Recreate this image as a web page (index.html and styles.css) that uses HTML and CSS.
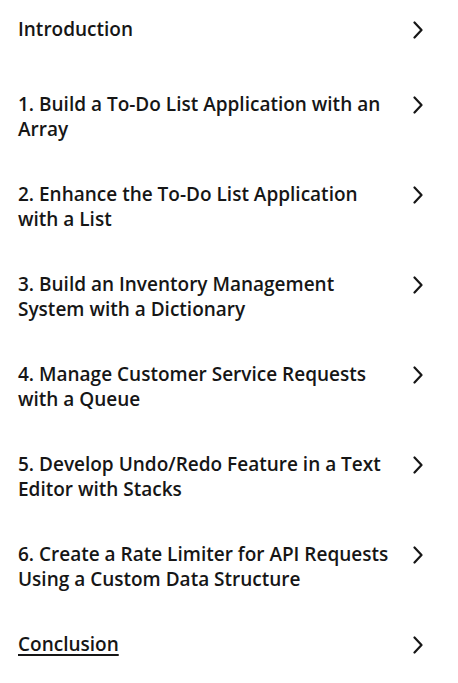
FILE: index.html
```html
<!DOCTYPE html>
<html lang="en">
<head>
<meta charset="utf-8">
<title>Contents</title>
<link rel="stylesheet" href="styles.css">
</head>
<body>
<nav class="toc">
  <a class="toc-item toc-item--intro" href="#introduction">
    <span class="toc-title">Introduction</span>
    <svg class="chev" viewBox="0 0 10 18" aria-hidden="true"><polyline points="1.5,1.5 8.5,9 1.5,16.5"/></svg>
  </a>
  <a class="toc-item" href="#array">
    <span class="toc-title">1. Build a To-Do List Application with an Array</span>
    <svg class="chev" viewBox="0 0 10 18" aria-hidden="true"><polyline points="1.5,1.5 8.5,9 1.5,16.5"/></svg>
  </a>
  <a class="toc-item" href="#list">
    <span class="toc-title">2. Enhance the To-Do List Application with a List</span>
    <svg class="chev" viewBox="0 0 10 18" aria-hidden="true"><polyline points="1.5,1.5 8.5,9 1.5,16.5"/></svg>
  </a>
  <a class="toc-item" href="#dictionary">
    <span class="toc-title">3. Build an Inventory Management System with a Dictionary</span>
    <svg class="chev" viewBox="0 0 10 18" aria-hidden="true"><polyline points="1.5,1.5 8.5,9 1.5,16.5"/></svg>
  </a>
  <a class="toc-item" href="#queue">
    <span class="toc-title">4. Manage Customer Service Requests with a Queue</span>
    <svg class="chev" viewBox="0 0 10 18" aria-hidden="true"><polyline points="1.5,1.5 8.5,9 1.5,16.5"/></svg>
  </a>
  <a class="toc-item" href="#stacks">
    <span class="toc-title">5. Develop Undo/Redo Feature in a Text Editor with Stacks</span>
    <svg class="chev" viewBox="0 0 10 18" aria-hidden="true"><polyline points="1.5,1.5 8.5,9 1.5,16.5"/></svg>
  </a>
  <a class="toc-item" href="#rate-limiter">
    <span class="toc-title">6. Create a Rate Limiter for API Requests Using a Custom Data Structure</span>
    <svg class="chev" viewBox="0 0 10 18" aria-hidden="true"><polyline points="1.5,1.5 8.5,9 1.5,16.5"/></svg>
  </a>
  <a class="toc-item" href="#conclusion">
    <span class="toc-title toc-title--current">Conclusion</span>
    <svg class="chev" viewBox="0 0 10 18" aria-hidden="true"><polyline points="1.5,1.5 8.5,9 1.5,16.5"/></svg>
  </a>
</nav>
</body>
</html>
```
FILE: styles.css
```css
html, body {
  margin: 0;
  padding: 0;
  background: #ffffff;
}

body {
  font-family: "Open Sans", "Noto Sans", sans-serif;
  color: #161616;
}

.toc {
  display: flex;
  flex-direction: column;
  gap: 40px;
  padding: 17px 35px 0 18px;
}

.toc-item {
  display: flex;
  align-items: flex-start;
  justify-content: space-between;
  color: inherit;
  text-decoration: none;
}

.toc-item--intro {
  margin-bottom: 10px;
}

.toc-title {
  flex: 0 1 378px;
  font-size: 19px;
  font-weight: 600;
  line-height: 25px;
}

.toc-title--current {
  text-decoration: underline;
  text-decoration-thickness: 1.5px;
  text-underline-offset: 3px;
}

.chev {
  flex: 0 0 auto;
  width: 10px;
  height: 18px;
  margin-top: 4px;
  fill: none;
  stroke: #161616;
  stroke-width: 2.2;
  stroke-linecap: round;
  stroke-linejoin: round;
}
```
